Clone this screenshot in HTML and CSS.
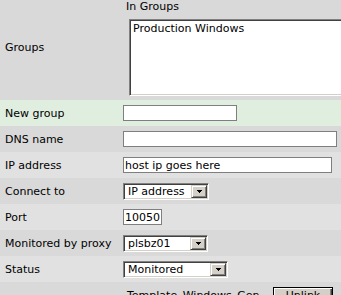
FILE: index.html
```html
<!DOCTYPE html>
<html lang="en">
<head>
    <meta charset="UTF-8">
    <title>Host</title>
    <link rel="stylesheet" href="styles.css">
</head>
<body>
    <table class="form">
        <colgroup>
            <col class="col-label">
            <col>
        </colgroup>
        <tr class="even groups-row">
            <td class="label groups-label">Groups</td>
            <td class="value groups-value">
                <div class="list-head">In Groups</div>
                <div class="listbox">
                    <div class="option">Production Windows</div>
                </div>
            </td>
        </tr>
        <tr class="new">
            <td class="label">New group</td>
            <td class="value"><input class="text w-newgroup" type="text"></td>
        </tr>
        <tr class="even">
            <td class="label">DNS name</td>
            <td class="value"><input class="text w-dns" type="text"></td>
        </tr>
        <tr class="odd">
            <td class="label">IP address</td>
            <td class="value"><input class="text w-ip" type="text" value="host ip goes here"></td>
        </tr>
        <tr class="even">
            <td class="label">Connect to</td>
            <td class="value">
                <span class="combo w-connect">
                    <span class="combo-text">IP address</span>
                    <span class="combo-btn"><svg width="5" height="3" viewBox="0 0 5 3"><path d="M0 0h5v1h-1v1h-1v1h-1v-1h-1v-1h-1z" fill="#000"/></svg></span>
                </span>
            </td>
        </tr>
        <tr class="odd">
            <td class="label">Port</td>
            <td class="value"><input class="text w-port" type="text" value="10050"></td>
        </tr>
        <tr class="even">
            <td class="label">Monitored by proxy</td>
            <td class="value">
                <span class="combo w-proxy">
                    <span class="combo-text">plsbz01</span>
                    <span class="combo-btn"><svg width="5" height="3" viewBox="0 0 5 3"><path d="M0 0h5v1h-1v1h-1v1h-1v-1h-1v-1h-1z" fill="#000"/></svg></span>
                </span>
            </td>
        </tr>
        <tr class="odd">
            <td class="label">Status</td>
            <td class="value">
                <span class="combo w-status">
                    <span class="combo-text">Monitored</span>
                    <span class="combo-btn"><svg width="5" height="3" viewBox="0 0 5 3"><path d="M0 0h5v1h-1v1h-1v1h-1v-1h-1v-1h-1z" fill="#000"/></svg></span>
                </span>
            </td>
        </tr>
        <tr class="even templates-row">
            <td class="label"></td>
            <td class="value templates-value">
                <div class="template">
                    <span class="template-name">Template_Windows_Gen</span>
                    <button class="btn" type="button">Unlink</button>
                </div>
            </td>
        </tr>
    </table>
</body>
</html>
```

FILE: styles.css
```css
html, body {
    margin: 0;
    padding: 0;
    overflow: hidden;
}
body {
    font-family: "DejaVu Sans", Verdana, sans-serif;
    font-size: 11px;
    line-height: 13px;
    color: #000;
    background: #d9d9d9;
}
.form {
    width: 100%;
    border-collapse: collapse;
    table-layout: fixed;
}
.col-label { width: 120px; }
.form tr { height: 26px; }
.form td {
    padding: 0;
    vertical-align: middle;
    white-space: nowrap;
}
.form td.label { padding-left: 5px; }
.form td.value { padding-left: 3px; }

.even { background: #d9d9d9; }
.odd { background: #e1e1e1; }
.new { background: #dfeedf; }

/* groups */
.form tr.groups-row { height: 100px; }
.form td.groups-label { padding-bottom: 6px; }
.form td.groups-value { vertical-align: top; overflow: hidden; }
.list-head { padding-left: 3px; }
.listbox {
    width: 230px;
    height: 77px;
    margin: 6px 0 0 6px;
    box-sizing: border-box;
    padding: 2px 2px;
    background: #fff;
    border: 1px solid;
    border-color: #808080 #fff #fff #808080;
    box-shadow: inset 1px 1px #404040, inset -1px -1px #d4d0c8;
}
.option { padding-left: 1px; }

/* inputs */
input.text {
    font: 11px "DejaVu Sans", Verdana, sans-serif;
    height: 16px;
    box-sizing: border-box;
    margin: 0;
    padding: 0 1px;
    border: 1px solid #7f7f7f;
    background: #fff;
    color: #000;
    vertical-align: middle;
}
.w-newgroup { width: 114px; }
.w-dns { width: 214px; }
.w-ip { width: 209px; }
.w-port { width: 39px; }

/* combo boxes */
.combo {
    display: inline-flex;
    height: 17px;
    box-sizing: border-box;
    padding: 1px;
    background: #fff;
    border: 1px solid;
    border-color: #808080 #fff #fff #808080;
    box-shadow: inset 1px 1px #404040, inset -1px -1px #d4d0c8;
    vertical-align: middle;
}
.combo-text {
    flex: 1;
    padding-left: 3px;
    line-height: 13px;
}
.combo-btn {
    width: 16px;
    height: 13px;
    box-sizing: border-box;
    display: flex;
    align-items: center;
    justify-content: center;
    padding-top: 1px;
    background: #d4d0c8;
    border: 1px solid;
    border-color: #d4d0c8 #404040 #404040 #d4d0c8;
    box-shadow: inset 1px 1px #fff, inset -1px -1px #808080;
}
.combo-btn svg { display: block; }
.w-connect { width: 86px; }
.w-proxy { width: 85px; }
.w-status { width: 105px; }

/* linked templates */
.form tr.templates-row { height: 60px; }
.form td.templates-value { vertical-align: top; padding-top: 5px; }
.template { display: flex; align-items: flex-start; }
.template-name {
    width: 150px;
    padding: 2px 0 0 4px;
    box-sizing: border-box;
}
.btn {
    width: 60px;
    margin: 0;
    padding: 1px 6px;
    font: 11px "DejaVu Sans", Verdana, sans-serif;
    line-height: 13px;
    color: #000;
    background: #d4d0c8;
    border: 1px solid #000;
    box-shadow: inset 1px 1px #fff, inset -1px -1px #404040, inset -2px -2px #808080;
}
```
